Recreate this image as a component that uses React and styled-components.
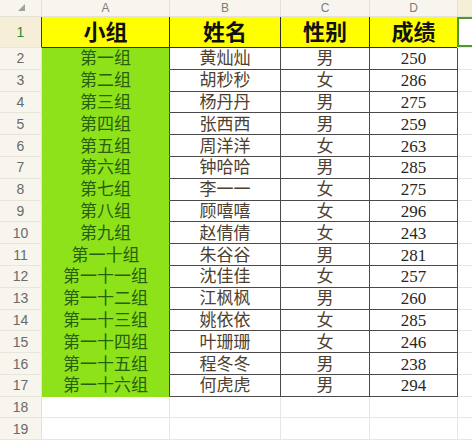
import React from 'react';
import styled, { createGlobalStyle, css } from 'styled-components';

const GlobalStyle = createGlobalStyle`
  html, body {
    margin: 0;
    padding: 0;
    background: #ffffff;
    overflow: hidden;
  }
`;

const rows = [
  ['第一组', '黄灿灿', '男', '250'],
  ['第二组', '胡秒秒', '女', '286'],
  ['第三组', '杨丹丹', '男', '275'],
  ['第四组', '张西西', '男', '259'],
  ['第五组', '周洋洋', '女', '263'],
  ['第六组', '钟哈哈', '男', '285'],
  ['第七组', '李一一', '女', '275'],
  ['第八组', '顾嘻嘻', '女', '296'],
  ['第九组', '赵倩倩', '女', '243'],
  ['第一十组', '朱谷谷', '男', '281'],
  ['第一十一组', '沈佳佳', '女', '257'],
  ['第一十二组', '江枫枫', '男', '260'],
  ['第一十三组', '姚依依', '女', '285'],
  ['第一十四组', '叶珊珊', '女', '246'],
  ['第一十五组', '程冬冬', '男', '238'],
  ['第一十六组', '何虎虎', '男', '294'],
];

const Sheet = styled.div`
  display: grid;
  grid-template-columns: 42px 128px 111px 89px 88px 120px;
  grid-template-rows: 17px 31px repeat(16, 21.8px) 21.5px 21.5px;
  width: 472px;
  height: 440px;
  overflow: hidden;
  font-family: "Liberation Serif", "Noto Sans CJK SC", serif;
`;

const Corner = styled.div`
  background: #f7f5ee;
  border-right: 1px solid #e4e1d6;
  border-bottom: 1px solid #e4e1d6;
  position: relative;

  &::after {
    content: "";
    position: absolute;
    left: 18px;
    top: 4px;
    width: 0;
    height: 0;
    border-style: solid;
    border-width: 0 0 7px 7px;
    border-color: transparent transparent #a0a0a0 transparent;
  }
`;

const ColHead = styled.div`
  background: ${p => (p.active ? '#f6eed6' : '#f7f5ee')};
  border-right: 1px solid #e4e1d6;
  border-bottom: 1px solid #e4e1d6;
  display: flex;
  align-items: center;
  justify-content: center;
  font-family: "Liberation Sans", Arial, sans-serif;
  font-size: 12px;
  color: #7d7d7d;
`;

const RowHead = styled.div`
  background: ${p => (p.active ? '#f6eed6' : '#f7f5ee')};
  border-right: 1px solid ${p => (p.active ? '#3a3a3a' : '#e4e1d6')};
  border-bottom: 1px solid #e8e5da;
  display: flex;
  align-items: center;
  justify-content: center;
  font-family: "Liberation Sans", Arial, sans-serif;
  font-size: 14px;
  color: ${p => (p.active ? '#2e8b3a' : '#6a6a6a')};
`;

const Cell = styled.div`
  display: flex;
  align-items: center;
  justify-content: center;
  white-space: nowrap;
  overflow: hidden;
  border-right: 1px solid #e6e6e6;
  border-bottom: 1px solid #e6e6e6;
  font-size: 17px;
  line-height: 1;
  padding-top: 1px;

  ${p => p.kind === 'head' && css`
    background: #ffff00;
    border-right-color: #2a2a2a;
    border-bottom-color: #2a2a2a;
    font-size: 22px;
    font-weight: 700;
    color: #111;
  `}

  ${p => p.kind === 'group' && css`
    background: #8ee21a;
    border-right-color: #444;
    border-bottom-color: #8ee21a;
    color: #2a5e10;
  `}

  ${p => p.kind === 'data' && css`
    background: #ffffff;
    border-right-color: #4a4a4a;
    border-bottom-color: #4a4a4a;
    color: ${p.tone || '#3b3026'};
  `}

  ${p => p.selected && css`
    box-shadow: inset 0 0 0 2px #4f9a2c;
    margin-left: -1px;
  `}
`;

export default function App() {
  return (
    <>
      <GlobalStyle />
      <Sheet>
        <Corner />
        <ColHead>A</ColHead>
        <ColHead>B</ColHead>
        <ColHead>C</ColHead>
        <ColHead>D</ColHead>
        <ColHead active />

        <RowHead active>1</RowHead>
        <Cell kind="head">小组</Cell>
        <Cell kind="head">姓名</Cell>
        <Cell kind="head">性别</Cell>
        <Cell kind="head">成绩</Cell>
        <Cell selected />

        {rows.map((r, i) => (
          <React.Fragment key={i}>
            <RowHead>{i + 2}</RowHead>
            <Cell kind="group">{r[0]}</Cell>
            <Cell kind="data" tone="#4e3f30">{r[1]}</Cell>
            <Cell kind="data" tone="#4e3f30">{r[2]}</Cell>
            <Cell kind="data" tone="#2b2622">{r[3]}</Cell>
            <Cell />
          </React.Fragment>
        ))}

        {[18, 19].map(n => (
          <React.Fragment key={n}>
            <RowHead>{n}</RowHead>
            <Cell />
            <Cell />
            <Cell />
            <Cell />
            <Cell />
          </React.Fragment>
        ))}
      </Sheet>
    </>
  );
}
